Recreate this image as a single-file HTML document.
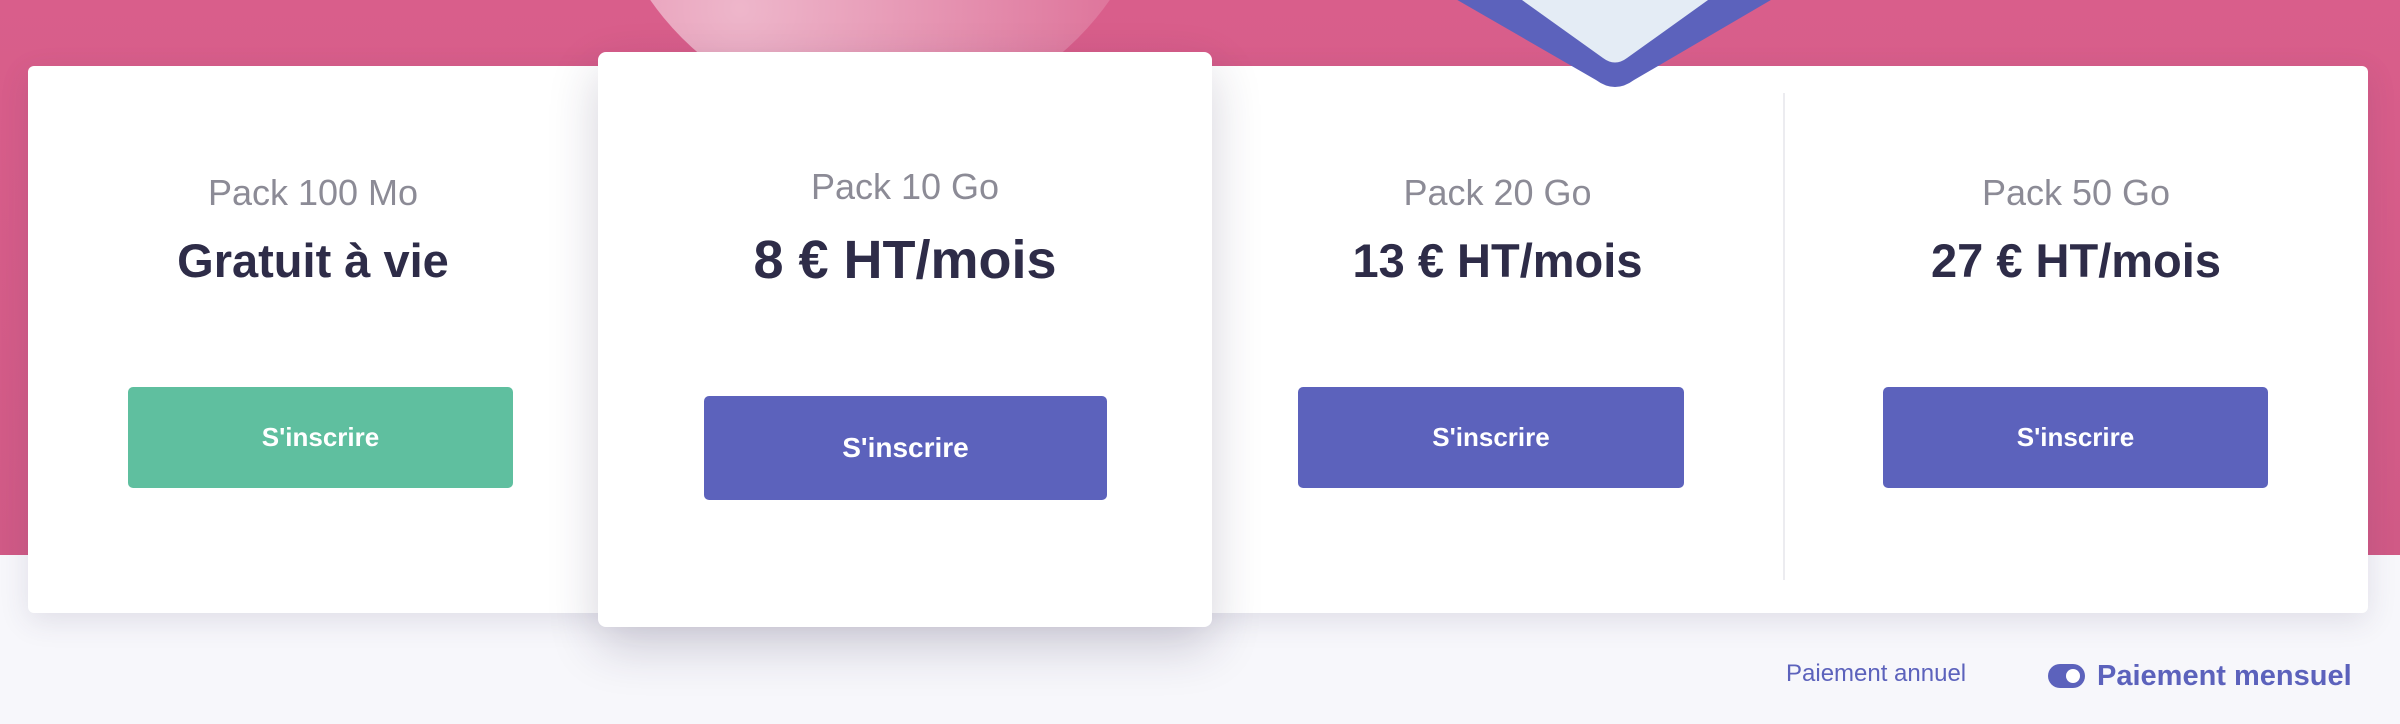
<!DOCTYPE html>
<html><head><meta charset="utf-8"><style>
*{margin:0;padding:0;box-sizing:border-box}
body{width:2400px;height:724px;overflow:hidden;background:#f7f7fb;font-family:"Liberation Sans",sans-serif;position:relative}
.band{position:absolute;left:0;top:0;width:2400px;height:555px;background:linear-gradient(#d95e8b,#d05a86);overflow:hidden}
.blob{position:absolute;left:600px;top:-440px;width:560px;height:560px;border-radius:50%;background:radial-gradient(circle at 25% 80%,rgba(255,255,255,.55),rgba(255,255,255,.15) 60%,rgba(255,255,255,.06));}
.row{position:absolute;left:28px;top:66px;width:2340px;height:547px;background:#fff;border-radius:6px;box-shadow:0 8px 30px rgba(60,50,90,.12)}
.div{position:absolute;left:1783px;top:93px;width:2px;height:487px;background:#ececf0}
.feat{position:absolute;left:598px;top:52px;width:614px;height:575px;background:#fff;border-radius:8px;box-shadow:0 20px 50px rgba(40,30,70,.2)}
.col{position:absolute;text-align:center}
.name{color:#8c8b96;font-size:36px}
.price{color:#2e2c48;font-size:47px;font-weight:bold}
.btn{position:absolute;border-radius:5px;background:#5c62bc;color:#fff;font-weight:bold;font-size:26px;display:flex;align-items:center;justify-content:center}
.bot{position:absolute;color:#5c62bc}
</style></head><body>
<div class="band"><div class="blob"></div></div>
<div class="row"></div>
<svg style="position:absolute;left:0;top:0" width="2400" height="120">
<path d="M1440 -10 L1596 80 Q1615 94 1634 80 L1788 -10 Z" fill="#5c62bc"/>
<path d="M1508 -10 L1603 58 Q1615 67 1627 58 L1722 -10 Z" fill="#e4ecf5"/>
</svg>
<div class="div"></div>
<div class="feat"></div>

<div class="col name" style="left:28px;width:570px;top:172px">Pack 100 Mo</div>
<div class="col price" style="left:28px;width:570px;top:233px">Gratuit à vie</div>
<div class="btn" style="left:128px;top:387px;width:385px;height:101px;background:#5fbf9f">S'inscrire</div>

<div class="col name" style="left:598px;width:614px;top:166px">Pack 10 Go</div>
<div class="col price" style="left:598px;width:614px;top:229px;font-size:54px">8 € HT/mois</div>
<div class="btn" style="left:704px;top:396px;width:403px;height:104px;font-size:28px">S'inscrire</div>

<div class="col name" style="left:1212px;width:571px;top:172px">Pack 20 Go</div>
<div class="col price" style="left:1212px;width:571px;top:233px">13 € HT/mois</div>
<div class="btn" style="left:1298px;top:387px;width:386px;height:101px">S'inscrire</div>

<div class="col name" style="left:1785px;width:582px;top:172px">Pack 50 Go</div>
<div class="col price" style="left:1785px;width:582px;top:233px">27 € HT/mois</div>
<div class="btn" style="left:1883px;top:387px;width:385px;height:101px">S'inscrire</div>

<div class="bot" style="left:1786px;top:660px;font-size:24px">Paiement annuel</div>
<div style="position:absolute;left:2048px;top:664px;width:37px;height:24px;border-radius:12px;background:#5c62bc"><div style="position:absolute;right:5px;top:5px;width:14px;height:14px;border-radius:50%;background:#fff"></div></div>
<div class="bot" style="left:2097px;top:660px;font-size:29px;font-weight:bold">Paiement mensuel</div>
</body></html>
